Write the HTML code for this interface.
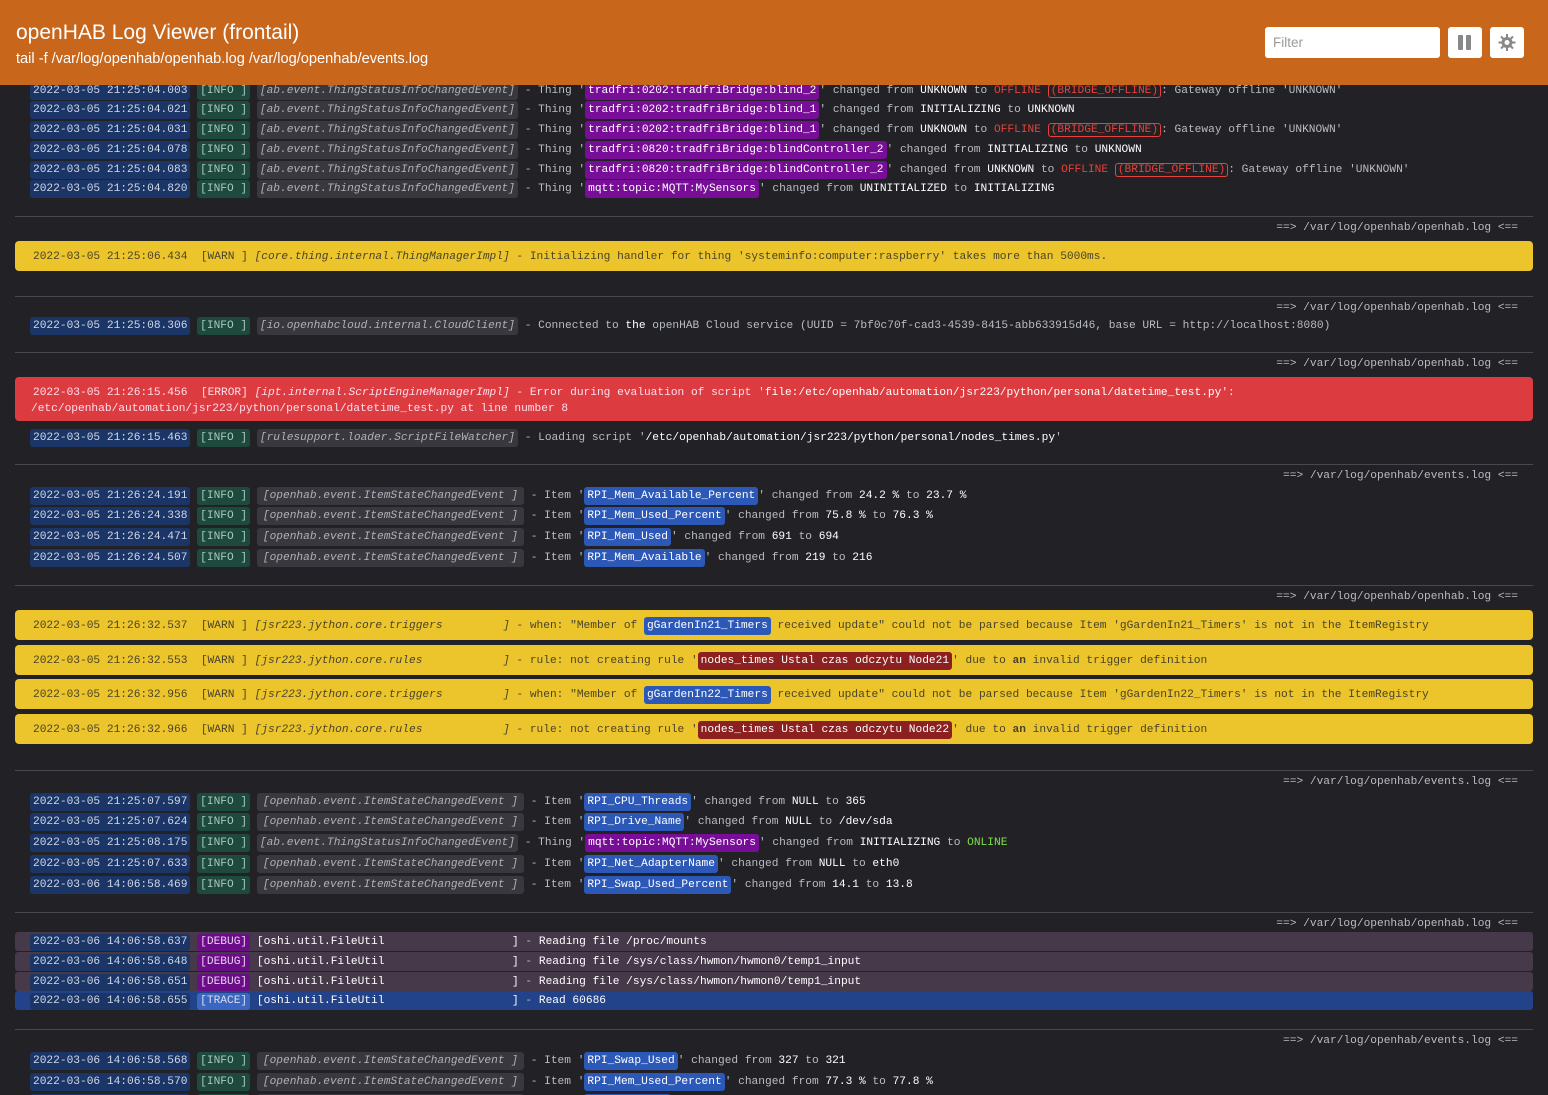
<!DOCTYPE html>
<html style="width:1548px;height:1095px;overflow:hidden"><head><meta charset="utf-8"><style>
*{margin:0;padding:0;box-sizing:border-box}
body{width:1548px;height:1095px;overflow:hidden;background:#222226;font-family:"Liberation Mono",monospace;font-size:11.2px;color:#b8bcc4;position:relative}
.hd{position:absolute;left:0;top:0;width:1548px;height:85px;background:#c8661c;z-index:5;font-family:"Liberation Sans",sans-serif;color:#fff}
.hd h1{position:absolute;left:16px;top:21px;font-size:21px;font-weight:normal}
.hd p{position:absolute;left:16px;top:51px;font-size:14.6px}
.flt{position:absolute;left:1265px;top:27px;width:175px;height:31px;background:#fff;border-radius:3px;color:#9a9a9a;font-size:13.5px;padding:8px 8px}
.btn{position:absolute;top:27px;width:34px;height:31px;background:#fff;border-radius:3px}
.r{position:absolute;left:30px;height:20px;line-height:20px;white-space:pre;margin-top:2px}
.ts,.lv,.lg,.pp,.bl,.rd,.dg,.tg{display:inline-block;line-height:18px;border-radius:3px;padding:0 3px}
.ts{background:#1b3566;color:#d0d8e8}
.lv{background:#1e4a3e;color:#a8c8bc}
.lg{background:#38383e;color:#b0b0b8;font-style:italic}
.pp{background:#780e98;color:#fff}
.bl{background:#2c58b8;color:#fff}
.w{color:#fff}
.off{color:#e8403a}
.bo{color:#e8403a;border:1px solid #e8403a;border-radius:3px;padding:0 2px}
.on{color:#7de04a}
.sep{position:absolute;left:15px;width:1518px;height:1px;background:#48484e}
.lab{position:absolute;right:30px;height:20px;line-height:20px;white-space:pre;color:#b8bcc4;margin-top:2px}
.wb{position:absolute;left:15px;width:1518px;height:30px;background:#ecc42c;border-radius:4px;color:#4a4428;line-height:32px;padding-left:18px;white-space:pre}
.wb i{font-style:italic}
.rd{background:#8c2020;color:#fff}
.eb{position:absolute;left:15px;top:377px;width:1518px;height:44px;background:#dc3c40;border-radius:4px;color:#fde;padding:8px 0 0 16px;line-height:16px;white-space:pre}
.db{position:absolute;left:15px;width:1518px;height:19px;background:#46394a;border-radius:3px;line-height:21px;white-space:pre;padding-left:15px}
.db .ts,.db .dg,.db .tg{line-height:17px}
.dg{background:#6c0d88;color:#e8d0f0}
.tb{background:#22428a}
.tg{background:#3866c0;color:#dde}
</style></head><body>
<div class="hd"><h1>openHAB Log Viewer (frontail)</h1><p>tail -f /var/log/openhab/openhab.log /var/log/openhab/events.log</p>
<div class="flt">Filter</div>
<div class="btn" style="left:1448px"><div style="position:absolute;left:10px;top:8px;width:5px;height:15px;background:#888;border-radius:1px"></div><div style="position:absolute;left:18px;top:8px;width:5px;height:15px;background:#888;border-radius:1px"></div></div>
<div class="btn" style="left:1490px"><svg width="34" height="31" viewBox="0 0 34 31"><g fill="#888"><circle cx="17" cy="15.5" r="5.5"/><rect x="16" y="7" width="2" height="17"/><rect x="8.5" y="14.5" width="17" height="2"/><rect x="16" y="7" width="2" height="17" transform="rotate(45 17 15.5)"/><rect x="16" y="7" width="2" height="17" transform="rotate(-45 17 15.5)"/></g><circle cx="17" cy="15.5" r="2.5" fill="#fff"/></svg></div>
</div>

<div class="r" style="top:79px"><span class="ts">2022-03-05 21:25:04.003</span> <span class="lv">[INFO ]</span> <span class="lg">[ab.event.ThingStatusInfoChangedEvent]</span> - Thing '<span class="pp">tradfri:0202:tradfriBridge:blind_2</span>' changed from <span class="w">UNKNOWN</span> to <span class="off">OFFLINE</span> <span class="bo">(BRIDGE_OFFLINE)</span>: Gateway offline 'UNKNOWN'</div>
<div class="r" style="top:98px"><span class="ts">2022-03-05 21:25:04.021</span> <span class="lv">[INFO ]</span> <span class="lg">[ab.event.ThingStatusInfoChangedEvent]</span> - Thing '<span class="pp">tradfri:0202:tradfriBridge:blind_1</span>' changed from <span class="w">INITIALIZING</span> to <span class="w">UNKNOWN</span></div>
<div class="r" style="top:118px"><span class="ts">2022-03-05 21:25:04.031</span> <span class="lv">[INFO ]</span> <span class="lg">[ab.event.ThingStatusInfoChangedEvent]</span> - Thing '<span class="pp">tradfri:0202:tradfriBridge:blind_1</span>' changed from <span class="w">UNKNOWN</span> to <span class="off">OFFLINE</span> <span class="bo">(BRIDGE_OFFLINE)</span>: Gateway offline 'UNKNOWN'</div>
<div class="r" style="top:138px"><span class="ts">2022-03-05 21:25:04.078</span> <span class="lv">[INFO ]</span> <span class="lg">[ab.event.ThingStatusInfoChangedEvent]</span> - Thing '<span class="pp">tradfri:0820:tradfriBridge:blindController_2</span>' changed from <span class="w">INITIALIZING</span> to <span class="w">UNKNOWN</span></div>
<div class="r" style="top:158px"><span class="ts">2022-03-05 21:25:04.083</span> <span class="lv">[INFO ]</span> <span class="lg">[ab.event.ThingStatusInfoChangedEvent]</span> - Thing '<span class="pp">tradfri:0820:tradfriBridge:blindController_2</span>' changed from <span class="w">UNKNOWN</span> to <span class="off">OFFLINE</span> <span class="bo">(BRIDGE_OFFLINE)</span>: Gateway offline 'UNKNOWN'</div>
<div class="r" style="top:177px"><span class="ts">2022-03-05 21:25:04.820</span> <span class="lv">[INFO ]</span> <span class="lg">[ab.event.ThingStatusInfoChangedEvent]</span> - Thing '<span class="pp">mqtt:topic:MQTT:MySensors</span>' changed from <span class="w">UNINITIALIZED</span> to <span class="w">INITIALIZING</span></div>

<div class="sep" style="top:216px"></div><div class="lab" style="top:216px">==&gt; /var/log/openhab/openhab.log &lt;==</div>
<div class="wb" style="top:241px">2022-03-05 21:25:06.434  [WARN ] <i>[core.thing.internal.ThingManagerImpl]</i> - Initializing handler for thing 'systeminfo:computer:raspberry' takes more than 5000ms.</div>

<div class="sep" style="top:296px"></div><div class="lab" style="top:296px">==&gt; /var/log/openhab/openhab.log &lt;==</div>
<div class="r" style="top:314px"><span class="ts">2022-03-05 21:25:08.306</span> <span class="lv">[INFO ]</span> <span class="lg">[io.openhabcloud.internal.CloudClient]</span> - Connected to <span class="w">the</span> openHAB Cloud service (UUID = 7bf0c70f-cad3-4539-8415-abb633915d46, base URL = http://localhost:8080)</div>

<div class="sep" style="top:352px"></div><div class="lab" style="top:352px">==&gt; /var/log/openhab/openhab.log &lt;==</div>
<div class="eb"><span style="margin-left:2px">2022-03-05 21:26:15.456</span>  [ERROR] <i>[ipt.internal.ScriptEngineManagerImpl]</i> - Error during evaluation of script '<span class="w">file:/etc/openhab/automation/jsr223/python/personal/datetime_test.py</span>':
/etc/openhab/automation/jsr223/python/personal/datetime_test.py at line number 8</div>
<div class="r" style="top:426px"><span class="ts">2022-03-05 21:26:15.463</span> <span class="lv">[INFO ]</span> <span class="lg">[rulesupport.loader.ScriptFileWatcher]</span> - Loading script '<span class="w">/etc/openhab/automation/jsr223/python/personal/nodes_times.py</span>'</div>

<div class="sep" style="top:464px"></div><div class="lab" style="top:464px">==&gt; /var/log/openhab/events.log &lt;==</div>
<div class="r" style="top:484px"><span class="ts">2022-03-05 21:26:24.191</span> <span class="lv">[INFO ]</span> <span class="lg" style="padding:0 6px">[openhab.event.ItemStateChangedEvent ]</span> - Item '<span class="bl">RPI_Mem_Available_Percent</span>' changed from <span class="w">24.2 %</span> to <span class="w">23.7 %</span></div>
<div class="r" style="top:504px"><span class="ts">2022-03-05 21:26:24.338</span> <span class="lv">[INFO ]</span> <span class="lg" style="padding:0 6px">[openhab.event.ItemStateChangedEvent ]</span> - Item '<span class="bl">RPI_Mem_Used_Percent</span>' changed from <span class="w">75.8 %</span> to <span class="w">76.3 %</span></div>
<div class="r" style="top:525px"><span class="ts">2022-03-05 21:26:24.471</span> <span class="lv">[INFO ]</span> <span class="lg" style="padding:0 6px">[openhab.event.ItemStateChangedEvent ]</span> - Item '<span class="bl">RPI_Mem_Used</span>' changed from <span class="w">691</span> to <span class="w">694</span></div>
<div class="r" style="top:546px"><span class="ts">2022-03-05 21:26:24.507</span> <span class="lv">[INFO ]</span> <span class="lg" style="padding:0 6px">[openhab.event.ItemStateChangedEvent ]</span> - Item '<span class="bl">RPI_Mem_Available</span>' changed from <span class="w">219</span> to <span class="w">216</span></div>

<div class="sep" style="top:585px"></div><div class="lab" style="top:585px">==&gt; /var/log/openhab/openhab.log &lt;==</div>
<div class="wb" style="top:610px">2022-03-05 21:26:32.537  [WARN ] <i>[jsr223.jython.core.triggers         ]</i> - when: "Member of <span class="bl">gGardenIn21_Timers</span> received update" could not be parsed because Item 'gGardenIn21_Timers' is not in the ItemRegistry</div>
<div class="wb" style="top:645px">2022-03-05 21:26:32.553  [WARN ] <i>[jsr223.jython.core.rules            ]</i> - rule: not creating rule '<span class="rd">nodes_times Ustal czas odczytu Node21</span>' due to <b>an</b> invalid trigger definition</div>
<div class="wb" style="top:679px">2022-03-05 21:26:32.956  [WARN ] <i>[jsr223.jython.core.triggers         ]</i> - when: "Member of <span class="bl">gGardenIn22_Timers</span> received update" could not be parsed because Item 'gGardenIn22_Timers' is not in the ItemRegistry</div>
<div class="wb" style="top:714px">2022-03-05 21:26:32.966  [WARN ] <i>[jsr223.jython.core.rules            ]</i> - rule: not creating rule '<span class="rd">nodes_times Ustal czas odczytu Node22</span>' due to <b>an</b> invalid trigger definition</div>

<div class="sep" style="top:770px"></div><div class="lab" style="top:770px">==&gt; /var/log/openhab/events.log &lt;==</div>
<div class="r" style="top:790px"><span class="ts">2022-03-05 21:25:07.597</span> <span class="lv">[INFO ]</span> <span class="lg" style="padding:0 6px">[openhab.event.ItemStateChangedEvent ]</span> - Item '<span class="bl">RPI_CPU_Threads</span>' changed from <span class="w">NULL</span> to <span class="w">365</span></div>
<div class="r" style="top:810px"><span class="ts">2022-03-05 21:25:07.624</span> <span class="lv">[INFO ]</span> <span class="lg" style="padding:0 6px">[openhab.event.ItemStateChangedEvent ]</span> - Item '<span class="bl">RPI_Drive_Name</span>' changed from <span class="w">NULL</span> to <span class="w">/dev/sda</span></div>
<div class="r" style="top:831px"><span class="ts">2022-03-05 21:25:08.175</span> <span class="lv">[INFO ]</span> <span class="lg">[ab.event.ThingStatusInfoChangedEvent]</span> - Thing '<span class="pp">mqtt:topic:MQTT:MySensors</span>' changed from <span class="w">INITIALIZING</span> to <span class="on">ONLINE</span></div>
<div class="r" style="top:852px"><span class="ts">2022-03-05 21:25:07.633</span> <span class="lv">[INFO ]</span> <span class="lg" style="padding:0 6px">[openhab.event.ItemStateChangedEvent ]</span> - Item '<span class="bl">RPI_Net_AdapterName</span>' changed from <span class="w">NULL</span> to <span class="w">eth0</span></div>
<div class="r" style="top:873px"><span class="ts">2022-03-06 14:06:58.469</span> <span class="lv">[INFO ]</span> <span class="lg" style="padding:0 6px">[openhab.event.ItemStateChangedEvent ]</span> - Item '<span class="bl">RPI_Swap_Used_Percent</span>' changed from <span class="w">14.1</span> to <span class="w">13.8</span></div>

<div class="sep" style="top:912px"></div><div class="lab" style="top:912px">==&gt; /var/log/openhab/openhab.log &lt;==</div>
<div class="db" style="top:932px"><span class="ts">2022-03-06 14:06:58.637</span> <span class="dg">[DEBUG]</span> <span class="w">[oshi.util.FileUtil                   ]</span> - <span class="w">Reading file /proc/mounts</span></div>
<div class="db" style="top:952px"><span class="ts">2022-03-06 14:06:58.648</span> <span class="dg">[DEBUG]</span> <span class="w">[oshi.util.FileUtil                   ]</span> - <span class="w">Reading file /sys/class/hwmon/hwmon0/temp1_input</span></div>
<div class="db" style="top:972px"><span class="ts">2022-03-06 14:06:58.651</span> <span class="dg">[DEBUG]</span> <span class="w">[oshi.util.FileUtil                   ]</span> - <span class="w">Reading file /sys/class/hwmon/hwmon0/temp1_input</span></div>
<div class="db tb" style="top:991px"><span class="ts">2022-03-06 14:06:58.655</span> <span class="tg">[TRACE]</span> <span class="w">[oshi.util.FileUtil                   ]</span> - <span class="w">Read 60686</span></div>

<div class="sep" style="top:1029px"></div><div class="lab" style="top:1029px">==&gt; /var/log/openhab/events.log &lt;==</div>
<div class="r" style="top:1049px"><span class="ts">2022-03-06 14:06:58.568</span> <span class="lv">[INFO ]</span> <span class="lg" style="padding:0 6px">[openhab.event.ItemStateChangedEvent ]</span> - Item '<span class="bl">RPI_Swap_Used</span>' changed from <span class="w">327</span> to <span class="w">321</span></div>
<div class="r" style="top:1070px"><span class="ts">2022-03-06 14:06:58.570</span> <span class="lv">[INFO ]</span> <span class="lg" style="padding:0 6px">[openhab.event.ItemStateChangedEvent ]</span> - Item '<span class="bl">RPI_Mem_Used_Percent</span>' changed from <span class="w">77.3 %</span> to <span class="w">77.8 %</span></div>
<div class="r" style="top:1091px"><span class="ts">2022-03-06 14:06:58.571</span> <span class="lv">[INFO ]</span> <span class="lg" style="padding:0 6px">[openhab.event.ItemStateChangedEvent ]</span> - Item '<span class="bl">RPI_Mem_Used</span>' changed</div>
</body></html>
